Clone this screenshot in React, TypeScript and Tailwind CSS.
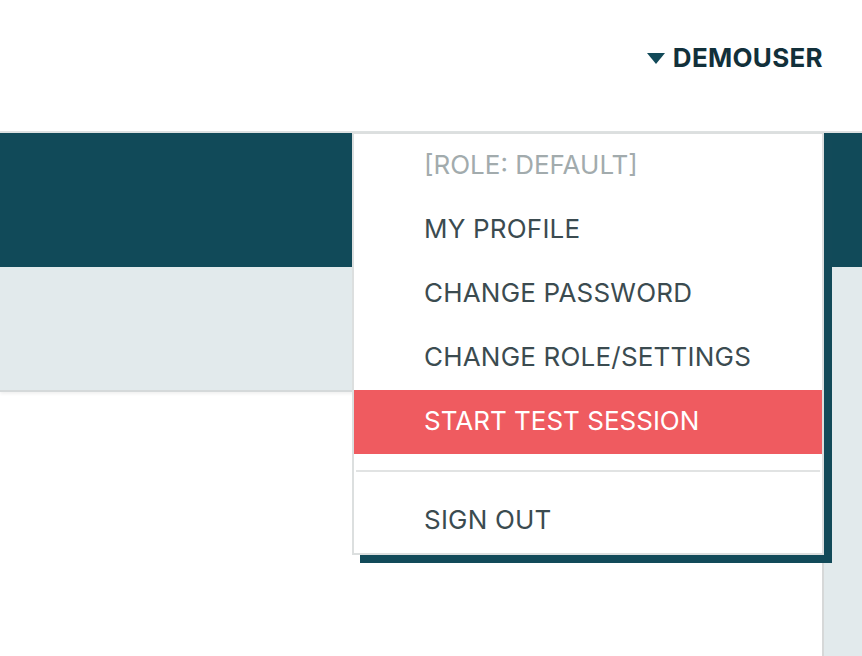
import React from 'react';

const items = ['MY PROFILE', 'CHANGE PASSWORD', 'CHANGE ROLE/SETTINGS'];

export default function App() {
  return (
    <div className="relative h-[656px] w-[862px] overflow-hidden bg-white font-['Inter',sans-serif]">
      <header className="flex h-[133px] items-center justify-end border-b-2 border-[#dde1e1] pr-[39px] pb-[16px]">
        <button className="flex items-center gap-[8px] text-[26px] font-bold tracking-[0.3px] text-[#12303a]">
          <svg width="18" height="11" viewBox="0 0 18 11" className="mt-[2px]">
            <path d="M0 0 L18 0 L9 11 Z" fill="#124a59" />
          </svg>
          DEMOUSER
        </button>
      </header>

      <div className="h-[134px] bg-[#114a59]" />

      <div className="flex h-[389px]">
        <div className="flex-1">
          <div className="h-[125px] border-b-2 border-[#d5d9da] bg-[#e2eaec] shadow-[0_2px_3px_rgba(0,0,0,0.06)]" />
        </div>
        <div className="w-[40px] border-l-2 border-[#d6d8d8] bg-[#e2eaec]" />
      </div>

      <div className="absolute left-[352px] top-[132px] w-[472px] border-2 border-[#dcdfdf] bg-white shadow-[8px_8px_0_#124a59]">
        <div className="flex h-16 items-center pb-[3px] pl-[70px] text-[26px] text-[#a2abad]">[ROLE: DEFAULT]</div>
        {items.map((label) => (
          <div key={label} className="flex h-16 items-center pb-[3px] pl-[70px] text-[26px] tracking-[0.2px] text-[#3b4b50]">
            {label}
          </div>
        ))}
        <div className="flex h-16 items-center bg-[#ef5b60] pb-[3px] pl-[70px] text-[26px] text-white">START TEST SESSION</div>
        <div className="mx-[2px] mt-4 mb-[17px] h-[2px] bg-[#e1e3e3]" />
        <div className="flex h-16 items-center pb-[3px] pl-[70px] text-[26px] tracking-[0.2px] text-[#3b4b50]">SIGN OUT</div>
      </div>
    </div>
  );
}
